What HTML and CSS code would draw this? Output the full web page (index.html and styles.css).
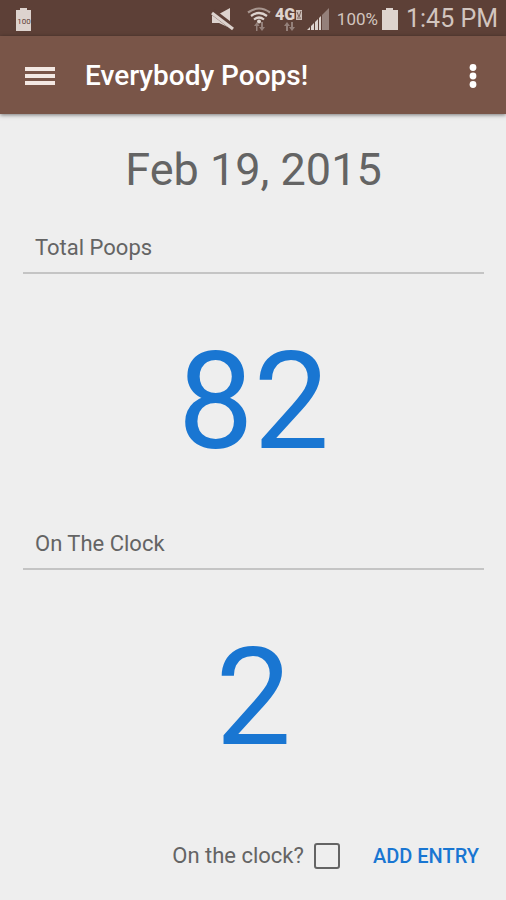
FILE: index.html
```html
<!DOCTYPE html>
<html lang="en">
<head>
<meta charset="utf-8">
<meta name="viewport" content="width=device-width, initial-scale=1">
<title>Everybody Poops!</title>
<link rel="stylesheet" href="styles.css">
</head>
<body>
<div class="status">
  <svg class="badge-battery" width="16" height="24" viewBox="0 0 16 24" aria-hidden="true">
    <path fill="#ddd3ce" d="M0 3h4V1h7v2h4v21H0z"/>
    <text x="8" y="17" text-anchor="middle" class="battery-text">100</text>
  </svg>
  <div class="status-icons">
    <svg width="24" height="24" viewBox="0 0 24 24" aria-hidden="true">
      <path fill="#ddd3ce" d="M1 7h7l11-6v20L8 16H1z"/>
      <path stroke="#5d4037" stroke-width="6" d="M2 5l21 16"/>
      <path stroke="#ddd3ce" stroke-width="3" d="M1 6l21 16"/>
    </svg>
    <svg width="24" height="26" viewBox="0 0 24 26" aria-hidden="true">
      <g fill="none" stroke="#ddd3ce" stroke-width="2.2">
        <path stroke="#a8968f" d="M1 6.500Q12-1.500 23 6.500"/>
        <path d="M4 10q8-6 16 0"/>
        <path d="M7 13.500q5-4 10 0"/>
      </g>
      <circle cx="12" cy="15.500" r="2" fill="#ddd3ce"/>
      <path fill="#94807a" d="M9 25V20H7l3-4 2.500 4h-2v5zM14 16v5h-2l3 4 3-4h-2v-5z"/>
    </svg>
    <svg width="28" height="26" viewBox="0 0 28 26" aria-hidden="true">
      <text x="0" y="14" class="network-text">4G</text>
      <path fill="#c9bcb6" d="M21 4h6v10h-6z"/>
      <path stroke="#795f57" d="M22 6l2 5M26 5l-2 6M22 12h4"/>
      <path fill="#94807a" d="M11 25V20H9l3-4 3 4h-2v5zM16 16v5h-2l3 4 3-4h-2v-5z"/>
    </svg>
    <svg width="22" height="24" viewBox="0 0 22 24" aria-hidden="true">
      <path fill="#ddd3ce" d="M0 23l3-3v3zM4 19l3-3v7H4zM8 15l3-3v11H8zM12 11l2-2v14h-2z"/>
      <path fill="#94807a" d="M15 8l7-7v22h-7z"/>
    </svg>
  </div>
  <span class="percent">100%</span>
  <svg class="battery" width="16" height="24" viewBox="0 0 16 24" aria-hidden="true">
    <path fill="#ddd3ce" d="M0 3h4V1h7v2h5v20H0z"/>
  </svg>
  <time class="clock">1:45 PM</time>
</div>
<header class="appbar">
  <button class="icon-button" type="button" aria-label="Menu">
    <svg width="30" height="20" viewBox="0 0 30 20"><path fill="#f3e8e3" d="M0 1h30v4H0zM0 8h30v4H0zM0 15h30v4H0z"/></svg>
  </button>
  <h1 class="title">Everybody Poops!</h1>
  <button class="icon-button" type="button" aria-label="More options">
    <svg width="8" height="26" viewBox="0 0 8 26"><g fill="#fff"><circle cx="4" cy="4.500" r="3.400"/><circle cx="4" cy="13" r="3.400"/><circle cx="4" cy="21.500" r="3.400"/></g></svg>
  </button>
</header>
<main class="content">
  <p class="date">Feb 19, 2015</p>
  <section class="stat">
    <h2 class="stat-label">Total Poops</h2>
    <p class="stat-value">82</p>
  </section>
  <section class="stat">
    <h2 class="stat-label">On The Clock</h2>
    <p class="stat-value">2</p>
  </section>
  <form class="entry">
    <label class="check-label" for="on-clock">On the clock?</label>
    <input class="check" type="checkbox" id="on-clock">
    <button class="add" type="button">ADD ENTRY</button>
  </form>
</main>
</body>
</html>
```
FILE: styles.css
```css
* {
  box-sizing: border-box;
}

body {
  margin: 0;
  min-height: 100vh;
  display: flex;
  flex-direction: column;
  background: #eee;
  color: #646464;
  font-family: Roboto, "Liberation Sans", sans-serif;
}

h1, h2, p {
  margin: 0;
  font-weight: 400;
}

svg {
  display: block;
  flex: none;
}

button {
  border: 0;
  padding: 0;
  background: none;
  font-family: inherit;
}

.status {
  display: flex;
  align-items: center;
  height: 36px;
  padding: 2px 8px 0 16px;
  background: #5d4037;
  color: #d2c5bf;
}

.battery-text {
  font-size: 8px;
  fill: #5d4037;
}

.network-text {
  font-size: 16px;
  font-weight: 900;
  fill: #ddd3ce;
}

.status-icons {
  display: flex;
  align-items: center;
  gap: 4px;
  margin-left: auto;
}

.status-icons svg:first-child {
  margin-right: 8px;
}

.percent {
  margin-left: 8px;
  font-size: 17px;
}

.battery {
  margin-left: 4px;
}

.clock {
  margin-left: 8px;
  font-size: 25px;
  line-height: 34px;
}

.appbar {
  display: flex;
  align-items: center;
  height: 78px;
  padding: 2px 29px 0 25px;
  background: #795548;
  box-shadow: 0 1px 4px rgba(0, 0, 0, 0.5);
}

.title {
  flex: 1;
  margin-left: 30px;
  color: #fff;
  font-size: 28px;
  font-weight: 500;
  line-height: 38px;
}

.content {
  flex: 1;
  display: flex;
  flex-direction: column;
  padding: 29px 22px 0 23px;
}

.date {
  margin-bottom: 37px;
  font-size: 45px;
  line-height: 54px;
  text-align: center;
}

.stat {
  flex: 1;
  display: flex;
  flex-direction: column;
}

.stat-label {
  padding: 0 12px 10px;
  border-bottom: 2px solid #c4c4c4;
  font-size: 22px;
  line-height: 28px;
}

.stat-value {
  margin: auto;
  color: #1976d2;
  font-size: 135px;
  line-height: 160px;
}

.entry {
  display: flex;
  align-items: center;
  justify-content: flex-end;
  padding: 10px 5px 24px 0;
}

.check-label {
  font-size: 22px;
  line-height: 28px;
}

.check {
  appearance: none;
  width: 26px;
  height: 26px;
  margin: 0 33px 0 10px;
  border: 2px solid #646464;
  border-radius: 3px;
}

.check:checked {
  background: #1976d2;
}

.add {
  color: #1976d2;
  font-size: 20px;
  font-weight: 500;
  line-height: 40px;
}
```
